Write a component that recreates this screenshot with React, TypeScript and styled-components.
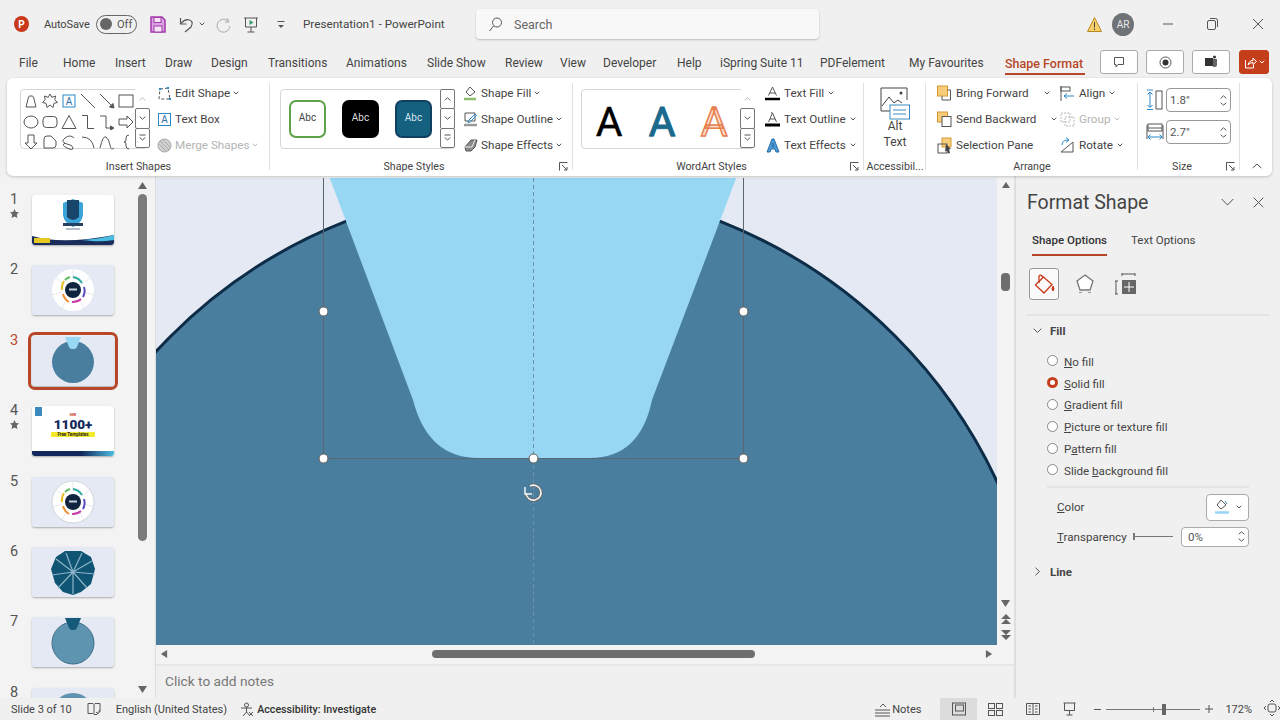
import React from "react";
import styled, { createGlobalStyle } from "styled-components";

const Global = createGlobalStyle`
  html, body { margin: 0; padding: 0; background: #f0f0f0; }
  * { box-sizing: border-box; }
  svg { display: block; flex: none; }
`;

const Page = styled.div`
  width: 1280px; height: 720px; overflow: hidden; display: flex; flex-direction: column;
  background: #f0f0f0; color: #444; font-family: Roboto, "Liberation Sans", sans-serif; font-size: 12px;
`;

/* ---------- title bar ---------- */
const TitleBar = styled.header`
  height: 48px; flex: none; display: flex; align-items: center; padding-left: 14px; position: relative;
`;
const Logo = styled.div`
  width: 15px; height: 16px; border-radius: 50%; background: #c8391b; color: #fff; font-size: 10px; font-weight: 700;
  display: flex; align-items: center; justify-content: center;
`;
const AutoLabel = styled.span`margin-left: 15px; width: 52px; font-size: 11px; letter-spacing: -.1px; color: #444;`;
const Toggle = styled.div`
  width: 41px; height: 19px; border: 1px solid #666; border-radius: 10px; display: flex; align-items: center; padding-left: 3px; gap: 5px; font-size: 11px; color: #555;
  &::before { content: ""; width: 12px; height: 12px; border-radius: 50%; background: #666; }
`;
const Qat = styled.div<{ $ml: number }>`margin-left: ${p => p.$ml}px; display: flex; align-items: center;`;
const DocTitle = styled.span`margin-left: 18px; width: 173px; font-size: 11.7px; color: #444;`;
const SearchBox = styled.div`
  width: 343px; height: 30px; background: #f8f8f8; border-radius: 4px; box-shadow: 0 1px 2px rgba(0,0,0,.22);
  display: flex; align-items: center; padding-left: 12px; gap: 12px; color: #666; font-size: 12.5px;
`;
const TitleRight = styled.div`
  margin-left: auto; display: flex; align-items: center;
`;
const Avatar = styled.div`
  width: 22px; height: 23px; border-radius: 50%; background: #6f7378; color: #e8e8e8; font-size: 10px; display: flex; align-items: center; justify-content: center; margin: 0 11px 0 10px;
`;
const WinBtn = styled.div`width: 45px; display: flex; justify-content: center;`;

/* ---------- tabs ---------- */
const TabBar = styled.nav`height: 30px; flex: none; display: flex; align-items: flex-start; padding-left: 19px;`;
const Tab = styled.div<{ $w: number; $active?: boolean }>`
  width: ${p => p.$w}px; flex: none; height: 26px; line-height: 31px; white-space: nowrap; position: relative;
  font-size: ${p => (p.$active ? 12.5 : 12)}px;
  color: ${p => (p.$active ? "#b7472a" : "#444")}; font-weight: ${p => (p.$active ? 500 : 400)};
`;
const TabLine = styled.div`position: absolute; left: 0; width: 80px; bottom: -1px; height: 2px; background: #b7472a;`;
const TabActions = styled.div`display: flex; gap: 8px; margin-left: 15px; margin-top: 2px;`;
const ActionBtn = styled.div<{ $share?: boolean }>`
  width: ${p => (p.$share ? 30 : 38)}px; height: 24px; border-radius: 3px; display: flex; align-items: center; justify-content: center; gap: 2px;
  background: ${p => (p.$share ? "#c43e1c" : "#fff")}; border: 1px solid ${p => (p.$share ? "#c43e1c" : "#aaa")}; margin-left: ${p => (p.$share ? 1 : 0)}px;
`;

/* ---------- ribbon ---------- */
const Ribbon = styled.section`
  height: 98px; flex: none; margin: 0 8px 0 7px; background: #fff; border-radius: 6px; box-shadow: 0 1px 3px rgba(0,0,0,.2); display: flex; position: relative; z-index: 2;
`;
const Group = styled.div<{ $w: number }>`
  width: ${p => p.$w}px; flex: none; display: flex; flex-direction: column; position: relative;
  &:not(:last-child)::after { content: ""; position: absolute; right: 0; top: 5px; bottom: 6px; width: 1px; background: #e0e0e0; }
`;
const GroupBody = styled.div<{ $pl: number }>`flex: 1; display: flex; padding-left: ${p => p.$pl}px; align-items: flex-start; min-height: 0;`;
const GroupLabel = styled.div<{ $pr?: number }>`
  height: 20px; flex: none; text-align: center; font-size: 10.7px; color: #444; line-height: 21px; white-space: nowrap; padding-right: ${p => p.$pr ?? 0}px;
`;
const Launcher = styled.div`position: absolute; right: 5px; bottom: 5px;`;
const Gallery = styled.div<{ $w: number }>`
  width: ${p => p.$w}px; height: 60px; margin-top: 11px; border: 1px solid #d6d6d6; border-radius: 4px; display: flex; position: relative; flex: none;
`;
const GalleryItems = styled.div`flex: 1; display: flex; align-items: center;`;
const ShapeGrid = styled.div`
  flex: 1; display: grid; grid-template-columns: repeat(6, 19px); grid-auto-rows: 20.5px; padding: 1px 0 0 0; align-content: start; justify-items: center; align-items: center;
`;
const ScrollCol = styled.div`width: 14px; flex: none; display: flex; flex-direction: column;`;
const ScrollBtn = styled.div<{ $off?: boolean }>`
  flex: 1; display: flex; align-items: center; justify-content: center;
  border: 1px solid ${p => (p.$off ? "transparent" : "#777")}; margin: -1px -1px 0 0; background: #fff; border-radius: 2px;
`;
const StyleSwatch = styled.div<{ $bg: string; $bd: string; $fg: string }>`
  width: 37px; height: 38px; border-radius: 7px; background: ${p => p.$bg}; border: 2px solid ${p => p.$bd}; color: ${p => p.$fg};
  display: flex; align-items: center; justify-content: center; font-size: 10px; padding-bottom: 4px; margin-left: ${p => (p.$bg === "#fff" ? 8 : 16)}px;
`;
const WordA = styled.div<{ $c: string; $s: string; $sw?: number; $shadow?: string; $ml: number }>`
  font-family: Roboto, sans-serif; font-size: 41px; line-height: 40px; font-weight: 400; margin-left: ${p => p.$ml}px; margin-top: 6px; width: 28px; text-align: center;
  color: ${p => p.$c}; -webkit-text-stroke: ${p => p.$sw ?? 1}px ${p => p.$s}; text-shadow: ${p => p.$shadow || "none"};
`;
const Commands = styled.div<{ $ml: number; $w?: number }>`
  margin-left: ${p => p.$ml}px; ${p => (p.$w ? `width:${p.$w}px;` : "")} padding-top: 2px; display: flex; flex-direction: column; flex: none;
`;
const Command = styled.div<{ $off?: boolean; $gap?: number }>`
  height: 26px; display: flex; align-items: center; gap: ${p => p.$gap ?? 3}px; white-space: nowrap; font-size: 11.7px; color: ${p => (p.$off ? "#b4b4b4" : "#444")};
`;
const CaretWrap = styled.span<{ $ml?: number }>`margin-left: ${p => p.$ml ?? 0}px; display: inline-flex;`;
const AltBox = styled.div`
  width: 100%; flex: 1; min-height: 0; display: flex; flex-direction: column; align-items: center; padding-top: 9px; font-size: 12px; line-height: 16px; text-align: center;
  svg { margin-bottom: -2px; }
`;
const SizeRows = styled.div`margin-left: 8px; margin-top: 10px; display: flex; flex-direction: column; gap: 8px;`;
const SizeRow = styled.div`display: flex; align-items: center; gap: 2px;`;
const SizeInput = styled.div`
  width: 65px; height: 24px; border: 1px solid #999; border-radius: 4px; display: flex; align-items: center; justify-content: space-between; padding: 0 3px 0 3px; font-size: 11.5px; color: #555; background: #fff;
`;
const Spin = styled.div`display: flex; flex-direction: column; gap: 3px;`;
const Collapse = styled.div`position: absolute; left: 1245px; top: 85px;`;

/* ---------- main ---------- */
const Main = styled.div`flex: 1; display: flex; min-height: 0; position: relative;`;
const SlidePane = styled.aside`width: 156px; flex: none; display: flex; overflow: hidden; background: #f3f3f3; border-right: 1px solid #dcdcdc;`;
const ThumbList = styled.div`width: 136px; flex: none; padding-top: 19px; display: flex; flex-direction: column; gap: 20.4px;`;
const ThumbRow = styled.div`display: flex; height: 50px; flex: none; position: relative;`;
const ThumbNum = styled.div<{ $sel?: boolean }>`
  width: 32px; flex: none; display: flex; flex-direction: column; align-items: center; padding-right: 4px; margin-top: -4px; font-size: 14.5px; line-height: 18px; color: ${p => (p.$sel ? "#b7472a" : "#555")};
`;
const Thumb = styled.div<{ $sel?: boolean }>`
  width: 82px; height: 50px; flex: none; border-radius: 3px; overflow: hidden; background: #e4e9f3; box-shadow: 0 1px 2px rgba(0,0,0,.3);
  ${p => p.$sel ? "outline: 3px solid #b7472a; outline-offset: 1px;" : ""}
`;
const ListScroll = styled.div`width: 11px; margin-left: 1px; flex: none; display: flex; flex-direction: column; align-items: center; padding-top: 5px;`;
const ThumbScrollBar = styled.div`width: 9px; height: 347px; margin-top: 4px; background: #7a7a7a; border-radius: 5px;`;
const ListDown = styled.div`margin-top: 144px;`;
const Center = styled.div`flex: 1; display: flex; flex-direction: column; min-width: 0; background: #f3f3f3;`;
const CanvasRow = styled.div`height: 467px; flex: none; display: flex; margin-top: 2px;`;
const Canvas = styled.div`width: 841px; height: 467px; flex: none; overflow: hidden; background: #e4e9f3;`;
const VBar = styled.div`flex: 1; display: flex; flex-direction: column; align-items: center; padding-top: 3px;`;
const VThumb = styled.div`width: 9px; height: 18px; margin-top: 84px; background: #6e6e6e; border-radius: 4px;`;
const VBottom = styled.div`margin-top: auto; display: flex; flex-direction: column; align-items: center; gap: 6px; padding-bottom: 5px;`;
const HBar = styled.div`height: 17px; flex: none; display: flex; align-items: center; padding-left: 4px;`;
const HThumb = styled.div`width: 323px; height: 8px; margin-left: 264px; background: #6e6e6e; border-radius: 4px;`;
const HEnd = styled.div`margin-left: 230px;`;
const NotesPane = styled.div`
  flex: 1; border-top: 2px solid #e6e6e6; margin-top: 2px; background: #f0f0f0; padding: 0 0 2px 9px; display: flex; align-items: center; font-size: 13.7px; color: #777;
`;

/* ---------- format panel ---------- */
const Panel = styled.aside`
  width: 266px; flex: none; border-left: 2px solid #dedede; background: #f0f0f0; padding: 0 0 0 11px; display: flex; flex-direction: column; position: relative;
`;
const PanelHead = styled.div`height: 49px; display: flex; align-items: center; padding-top: 3px;`;
const PanelTitle = styled.div`font-size: 19.5px; color: #444; flex: 1;`;
const PanelHeadIcons = styled.div`display: flex; gap: 19px; padding-right: 16px; align-items: center;`;
const PanelTabs = styled.div`display: flex; gap: 24px; padding-left: 5px; height: 31px; align-items: center;`;
const PanelTab = styled.div<{ $active?: boolean }>`
  height: 31px; line-height: 31px; font-size: 11.5px; position: relative; color: ${p => (p.$active ? "#333" : "#444")};
  ${p => p.$active ? "font-weight: 500; box-shadow: inset 0 -2px 0 #b7472a;" : ""}
`;
const PanelIcons = styled.div`display: flex; margin-top: 12px; align-items: center; padding-left: 2px; gap: 11px;`;
const IconTab = styled.div<{ $active?: boolean }>`
  width: 30px; height: 32px; display: flex; align-items: center; justify-content: center; border-radius: 3px;
  ${p => p.$active ? "border: 1px solid #999; background: #fafafa;" : ""}
`;
const Rule = styled.div<{ $ml?: number; $mr?: number; $mt?: number }>`
  height: 2px; flex: none; background: #e4e4e4; margin: ${p => p.$mt ?? 0}px ${p => p.$mr ?? 0}px 0 ${p => p.$ml ?? 0}px;
`;
const SectionHead = styled.div<{ $mt: number }>`display: flex; align-items: center; gap: 8px; font-weight: 700; font-size: 11.5px; color: #444; padding-left: 6px; margin-top: ${p => p.$mt}px;`;
const RadioList = styled.div`display: flex; flex-direction: column; padding-left: 20px; margin-top: 13px;`;
const RadioRow = styled.div`height: 21.8px; display: flex; align-items: center; gap: 6px; font-size: 11.6px; color: #444;`;
const Radio = styled.span<{ $on?: boolean }>`
  width: 11px; height: 11px; border-radius: 50%; background: #fff; flex: none; margin-top: -2px;
  border: ${p => (p.$on ? "3px solid #c43e1c" : "1px solid #888")};
`;
const PropRow = styled.div<{ $mt: number }>`display: flex; align-items: center; padding-left: 30px; margin-right: 31px; margin-top: ${p => p.$mt}px; font-size: 11.6px; color: #444;`;
const ColorBtn = styled.div`
  margin-left: auto; width: 43px; height: 27px; border: 1px solid #aaa; border-radius: 4px; background: #fff; display: flex; align-items: center; justify-content: center; gap: 6px;
`;
const SliderTrack = styled.div`
  margin-left: 6px; width: 40px; height: 1px; background: #777; position: relative;
  &::before { content: ""; position: absolute; left: 0; top: -3px; width: 2px; height: 7px; background: #777; }
`;
const PropInput = styled.div`
  margin-left: auto; width: 68px; height: 20px; border: 1px solid #aaa; border-radius: 4px; background: #fff; display: flex; align-items: center; justify-content: space-between; padding: 0 3px 0 6px; font-size: 11.5px; color: #555;
`;

/* ---------- status bar ---------- */
const StatusBar = styled.footer`
  height: 22px; flex: none; display: flex; align-items: center; background: #f0f0f0; padding-left: 11px; font-size: 11px; color: #444; position: relative; z-index: 2;
`;
const StatusText = styled.span<{ $ml?: number; $bold?: boolean }>`
  margin-left: ${p => p.$ml ?? 0}px; white-space: nowrap; font-weight: ${p => (p.$bold ? 500 : 400)}; color: ${p => (p.$bold ? "#333" : "#444")};
  font-size: ${p => (p.$bold ? 10.7 : 11)}px;
`;
const StatusRight = styled.div`margin-left: auto; display: flex; align-items: center; height: 22px;`;
const ViewBtn = styled.div<{ $active?: boolean }>`
  width: 37px; height: 22px; display: flex; align-items: center; justify-content: center; background: ${p => (p.$active ? "#dcdcdc" : "transparent")};
`;
const ZoomTrack = styled.div`
  width: 94px; height: 1px; background: #777; position: relative; margin: 0 5px;
  &::before { content: ""; position: absolute; left: 47px; top: -2px; width: 1px; height: 5px; background: #777; }
  &::after { content: ""; position: absolute; left: 56px; top: -5px; width: 4px; height: 11px; background: #666; }
`;

/* ---------- icons ---------- */
type P = { w?: number; h?: number; vb?: string; children: React.ReactNode };
const Ic = ({ w = 16, h = 16, vb, children }: P) => (
  <svg width={w} height={h} viewBox={vb || `0 0 ${w} ${h}`} fill="none" stroke="#555" strokeWidth="1">{children}</svg>
);
const Caret = () => <Ic w={6} h={4}><path d="M.7.7 3 3l2.3-2.3" /></Ic>;
const Up = () => <Ic w={7} h={4}><path d="M.7 3.3 3.5.8l2.8 2.5" /></Ic>;
const Down = () => <Ic w={7} h={4}><path d="M.7.7 3.5 3.2 6.3.7" /></Ic>;
const Tri = ({ d, c = "#666", s = 9 }: { d: "u" | "d" | "l" | "r"; c?: string; s?: number }) => {
  const m = { u: "M0 8 4.5 1 9 8Z", d: "M0 1 4.5 8 9 1Z", l: "M8 0 1 4.5 8 9Z", r: "M1 0 8 4.5 1 9Z" }[d];
  return <svg width={s} height={s} viewBox="0 0 9 9"><path d={m} fill={c} /></svg>;
};
const LaunchIc = () => <Ic w={9} h={9}><path d="M.5 8.5V.5h8" /><path d="M3 3l5 5M8 5v3H5" /></Ic>;

const shapes: React.ReactNode[] = [
  <path d="M3 14 5.5 4Q6 3 7 3h2q1 0 1.500 1L13 14Z" />,
  <path d="M8 1l1.800 3.300L13.600 3l-.8 3.700L15.500 9.500l-3.500.8L11 14.500 8 12l-3 2.500-1-4.200-3.500-.8 2.700-2.800L2.400 3l3.800 1.300Z" />,
  <><rect x="2" y="2" width="12" height="12" stroke="#2b88c8" /><text x="8" y="12" textAnchor="middle" fontSize="10" fill="#2b6ea8" stroke="none" fontFamily="Roboto">A</text></>,
  <path d="M1 1 15 15" />,
  <><path d="M1 1 15 15" /><path d="M15 15 14 10.500 10.500 14Z" fill="#555" /></>,
  <rect x="1" y="2" width="14" height="12" />,
  <ellipse cx="8" cy="8" rx="7" ry="6" />,
  <rect x="1" y="2.500" width="14" height="11" rx="3.500" />,
  <path d="M8 1.500 15 14.500H1Z" />,
  <path d="M2 1.500h5.500v13H14" />,
  <><path d="M1 2h6v12h6" /><path d="M15 14 11.500 12v4Z" fill="#555" /></>,
  <path d="M1 5h8V2l6 6-6 6v-3H1Z" />,
  <path d="M5 1h6v8h3l-6 6-6-6h3Z" />,
  <path d="M2 14V5Q2 2 5 2h4l5 5v4q0 3-3 3Z" />,
  <path d="M13 4Q9 0 4 4t2 6q6 1 6 4T6 14 4 9" />,
  <path d="M2 3Q12 3 14 14" />,
  <path d="M1 14Q4 1 7 3t4 8 4 3" />,
  <path d="M11 1Q8 1 8 4v2Q8 8 6 8q2 0 2 2v2q0 3 3 3" />,
];

const Stack = styled.div`position: relative; display: flex;`;
const Shield = () => (
  <svg width="82" height="50" viewBox="0 0 82 50">
    <rect width="82" height="50" fill="#fff" />
    <path d="M31 8 41 4 51 8V20Q50 28 41 32 32 28 31 20Z" fill="#3aa3d8" />
    <path d="M35 5H47V22Q41 28 35 22Z" fill="#17456c" />
    <rect x="31" y="28" width="20" height="3" fill="#27405f" />
    <rect x="34" y="33" width="14" height="2" fill="#b8c0cc" />
    <path d="M0 41Q30 50 82 40V50H0Z" fill="#1a2c5c" />
    <path d="M50 45Q68 44 82 40V45Q70 47 60 46Z" fill="#4bbde0" />
    <rect x="2" y="43" width="16" height="5" fill="#e8c81e" />
  </svg>
);
const Wheel = ({ white }: { white?: boolean }) => (
  <svg width="82" height="50" viewBox="0 0 82 50">
    <rect width="82" height="50" fill="#e4e9f3" />
    <circle cx="41" cy="25" r="21" fill="#fff" stroke={white ? "#d0d4dc" : "none"} />
    <g stroke="#dde0e6" strokeWidth=".7">
      <path d="M41 4V14M58 13 50 19M62 30 52 27M52 43 47 34M30 43 35 34M20 30 30 27M24 13 32 19" />
    </g>
    <g fill="none" strokeWidth="2">
      <path d="M32 16a13 13 0 0 0-2 9" stroke="#e8c030" />
      <path d="M31 29a13 13 0 0 0 6 8" stroke="#f09030" />
      <path d="M40 37a13 13 0 0 0 9-3" stroke="#c83aa8" />
      <path d="M51 32a13 13 0 0 0 1-10" stroke="#5a4ac0" />
      <path d="M50 18a13 13 0 0 0-9-6" stroke="#30a8a0" />
      <path d="M38 12a13 13 0 0 0-5 3" stroke="#60c060" />
    </g>
    <circle cx="41" cy="25" r="8" fill="#10243f" />
    <rect x="37" y="23.500" width="8" height="2" fill="#c8d0dc" />
  </svg>
);
const Disc = ({ fill, top, stroke }: { fill: string; top: string; stroke?: string }) => (
  <svg width="82" height="50" viewBox="0 0 82 50">
    <rect width="82" height="50" fill="#e4e9f3" />
    <circle cx="41" cy="26" r="21" fill={fill} stroke={stroke || "none"} />
    <path d="M33 1H49L45 11Q44 13 42 13H40Q38 13 37 11Z" fill={top} />
  </svg>
);
const Gear = () => (
  <svg width="82" height="50" viewBox="0 0 82 50">
    <rect width="82" height="50" fill="#e4e9f3" />
    <path d="M33 4H49L59 10 63 22 59 37 49 45 41 48 31 45 23 36 19 22 24 10Z" fill="#0f5473" />
    <g stroke="#8db4c8" strokeWidth="1.200">
      <path d="M41 25 34 6M41 25 50 6M41 25 60 14M41 25 63 27M41 25 55 41M41 25 41 47M41 25 26 41M41 25 20 28M41 25 24 12" />
    </g>
  </svg>
);
const BigThumb = styled.div`
  width: 82px; height: 50px; background: #fff; position: relative; display: flex; flex-direction: column; align-items: center; overflow: hidden;
`;
const ThumbMini = styled.div`height: 5px; font-size: 3px; line-height: 5px; color: #c8391b; margin-top: 7px; font-weight: 700;`;
const ThumbBig = styled.div`font-size: 13.500px; line-height: 13px; font-weight: 900; color: #12285c;`;
const ThumbTag = styled.div`background: #f2ea28; border-radius: 1px; font-size: 4.500px; line-height: 5px; width: 44px; text-align: center; color: #222; font-weight: 700; margin-top: 1px;`;
const ThumbWave = styled.div`position: absolute; left: 0; right: 0; bottom: 0; height: 5px; background: linear-gradient(90deg,#12285c 60%,#4bbde0);`;
const ThumbCorner = styled.div`position: absolute; left: 3px; top: 1px; width: 7px; height: 9px; background: #3a8ac0;`;

const thumbs: { n: number; star?: boolean; el: React.ReactNode; sel?: boolean }[] = [
  { n: 1, star: true, el: <Shield /> },
  { n: 2, el: <Wheel /> },
  { n: 3, sel: true, el: <Disc fill="#4a7e9e" top="#99d8f5" /> },
  { n: 4, star: true, el: <BigThumb><ThumbCorner /><ThumbMini>NEW</ThumbMini><ThumbBig>1100+</ThumbBig><ThumbTag>Free Templates</ThumbTag><ThumbWave /></BigThumb> },
  { n: 5, el: <Wheel white /> },
  { n: 6, el: <Gear /> },
  { n: 7, el: <Disc fill="#5f94b0" top="#155a78" stroke="#3e6f8a" /> },
  { n: 8, el: <Disc fill="#5f94b0" top="#5f94b000" /> },
];

const tabs: [string, number][] = [
  ["File", 44], ["Home", 52], ["Insert", 50], ["Draw", 46], ["Design", 57], ["Transitions", 78], ["Animations", 81],
  ["Slide Show", 78], ["Review", 55], ["View", 43], ["Developer", 74], ["Help", 43], ["iSpring Suite 11", 100], ["PDFelement", 89], ["My Favourites", 96],
];

const ScrollDownMore = () => <Ic w={7} h={7}><path d="M.5 1h6" /><path d="M.7 3.500 3.500 6l2.800-2.500" /></Ic>;
const ScrollUpOff = () => <svg width="7" height="4" viewBox="0 0 7 4"><path d="M.7 3.300 3.500.8l2.800 2.500" stroke="#bbb" fill="none" /></svg>;
const CaretOff = () => <svg width="6" height="4" viewBox="0 0 6 4"><path d="M.7.7 3 3l2.300-2.300" stroke="#bbb" fill="none" /></svg>;

const App = () => (
  <Page>
    <Global />
    <TitleBar>
      <Logo>P</Logo>
      <AutoLabel>AutoSave</AutoLabel>
      <Toggle>Off</Toggle>
      <Qat $ml={13}>
        <Ic w={16} h={17}>
          <path d="M1 1h11l3 3v12H1Z" stroke="#a33aa8" strokeWidth="1.500" fill="#d9a2e0" />
          <rect x="4" y="1.500" width="7" height="5" fill="#f4e6f6" stroke="#a33aa8" />
          <rect x="4" y="10" width="8" height="6" fill="#f4e6f6" stroke="#a33aa8" />
        </Ic>
      </Qat>
      <Qat $ml={13}>
        <Ic w={15} h={17}><path d="M1.500 2v6h6" strokeWidth="1.200" /><path d="M2 7.500Q6 2.500 10.500 4T12 11L6 16" strokeWidth="1.200" /></Ic>
        <CaretWrap $ml={5}><Caret /></CaretWrap>
      </Qat>
      <Qat $ml={11}>
        <Ic w={16} h={17}><path d="M11 2 13 6H9" stroke="#aaa" /><path d="M12 5A6.500 6.500 0 1 0 14 10" stroke="#aaa" /></Ic>
      </Qat>
      <Qat $ml={11}>
        <Ic w={16} h={17}>
          <path d="M1 2h14M2.500 2v9h11V2M8 11v5M4.500 16h7" />
          <path d="M6.500 4v5L10.500 6.500Z" fill="#2f9e6e" stroke="none" />
        </Ic>
      </Qat>
      <Qat $ml={18}><Ic w={8} h={9}><path d="M.5 1.500h7" /><path d="M1 5h6L4 8Z" fill="#555" stroke="none" /></Ic></Qat>
      <DocTitle>Presentation1 - PowerPoint</DocTitle>
      <SearchBox>
        <Ic w={14} h={15}><circle cx="9" cy="5.500" r="4.500" /><path d="M5.500 9 1.500 14" /></Ic>
        Search
      </SearchBox>
      <TitleRight>
        <Ic w={15} h={17}><path d="M7.500 1.500 14.500 15.500H.5Z" fill="#f6cf6b" stroke="#b98a20" /><path d="M7.500 6v5.500M7.500 12.500v1.500" stroke="#444" /></Ic>
        <Avatar>AR</Avatar>
        <WinBtn><Ic w={10} h={2}><path d="M0 1h10" /></Ic></WinBtn>
        <WinBtn><Ic w={11} h={12}><rect x=".5" y="2.500" width="8" height="9" rx="1.500" /><path d="M3 .5h5.500q2 0 2 2V9" /></Ic></WinBtn>
        <WinBtn><Ic w={12} h={12}><path d="M1 1 11 11M11 1 1 11" /></Ic></WinBtn>
      </TitleRight>
    </TitleBar>

    <TabBar>
      {tabs.map(([t, w]) => <Tab key={t} $w={w}>{t}</Tab>)}
      <Tab $w={80} $active>Shape Format<TabLine /></Tab>
      <TabActions>
        <ActionBtn><Ic w={12} h={12}><path d="M1.500 1.500h9v7H5L3 11V8.500H1.500Z" /></Ic></ActionBtn>
        <ActionBtn><Ic w={13} h={13}><circle cx="6.500" cy="6.500" r="5.500" /><circle cx="6.500" cy="6.500" r="3" fill="#333" stroke="none" /></Ic></ActionBtn>
        <ActionBtn><Ic w={14} h={14}><rect x="1" y="3" width="8" height="8" fill="#333" stroke="none" /><path d="M9 4h4v6q0 2-2 2H9" fill="#666" stroke="none" /><circle cx="10.500" cy="2" r="1.500" fill="#333" stroke="none" /></Ic></ActionBtn>
        <ActionBtn $share>
          <Ic w={13} h={13}><path d="M1.500 4v8h8V9" stroke="#fff" /><path d="M4 9Q5 4.500 9 4.500V2l3.500 3.500L9 8.500V6.500Q6 6.500 4 9Z" stroke="#fff" /></Ic>
          <svg width="6" height="4" viewBox="0 0 6 4"><path d="M.7.7 3 3l2.300-2.300" stroke="#fff" fill="none" /></svg>
        </ActionBtn>
      </TabActions>
    </TabBar>

    <Ribbon>
      <Group $w={263}>
        <GroupBody $pl={13}>
          <Gallery $w={128}>
            <ShapeGrid>{shapes.map((s, i) => <Ic key={i} w={16} h={16}>{s}</Ic>)}</ShapeGrid>
            <ScrollCol>
              <ScrollBtn $off><ScrollUpOff /></ScrollBtn>
              <ScrollBtn><Down /></ScrollBtn>
              <ScrollBtn><ScrollDownMore /></ScrollBtn>
            </ScrollCol>
          </Gallery>
          <Commands $ml={9}>
            <Command>
              <Ic w={15} h={15}><path d="M3 3 11 2 13 13H2Z" strokeDasharray="3 2" /><rect x="2" y="2" width="2" height="2" fill="#2b88c8" stroke="none" /><rect x="10" y="1" width="2" height="2" fill="#2b88c8" stroke="none" /><rect x="12" y="12" width="2" height="2" fill="#2b88c8" stroke="none" /></Ic>
              Edit Shape <Caret />
            </Command>
            <Command>
              <Ic w={15} h={15}><rect x="1.500" y="1.500" width="12" height="12" stroke="#2b88c8" /><text x="7.500" y="11" textAnchor="middle" fontSize="10" fill="#2b6ea8" stroke="none" fontFamily="Roboto">A</text></Ic>
              Text Box
            </Command>
            <Command $off>
              <svg width="15" height="15" viewBox="0 0 15 15"><circle cx="7.500" cy="7.500" r="6.500" fill="#d0d0d0" stroke="#aaa" /><path d="M3 3l9 9M6 2l7 7M2 6l7 7" stroke="#aaa" /></svg>
              Merge Shapes <CaretOff />
            </Command>
          </Commands>
        </GroupBody>
        <GroupLabel>Insert Shapes</GroupLabel>
      </Group>

      <Group $w={303}>
        <GroupBody $pl={10}>
          <Gallery $w={175}>
            <GalleryItems>
              <StyleSwatch $bg="#fff" $bd="#5da24a" $fg="#444">Abc</StyleSwatch>
              <StyleSwatch $bg="#000" $bd="#000" $fg="#ddd">Abc</StyleSwatch>
              <StyleSwatch $bg="#15607f" $bd="#103f60" $fg="#cfe4ee">Abc</StyleSwatch>
            </GalleryItems>
            <ScrollCol>
              <ScrollBtn><Up /></ScrollBtn>
              <ScrollBtn><Down /></ScrollBtn>
              <ScrollBtn><ScrollDownMore /></ScrollBtn>
            </ScrollCol>
          </Gallery>
          <Commands $ml={8}>
            <Command>
              <Ic w={15} h={15}><path d="M7 1 12 6 7 10 3 6Z" /><path d="M1 13h12" stroke="#8cc070" strokeWidth="2.500" /></Ic>
              Shape Fill <Caret />
            </Command>
            <Command>
              <Ic w={15} h={15}><path d="M2 1h10v8H2Z" /><path d="M5 9 12 2l1.500 1.500L6.500 10.500H5Z" stroke="#2b88c8" /><path d="M1 13h13" stroke="#999" strokeWidth="2.500" /></Ic>
              Shape Outline <Caret />
            </Command>
            <Command>
              <Ic w={15} h={15}><path d="M2 9 8 2h6l-2 7-4 4H3Z" fill="#8a8a8a" /><path d="M2 9h7l3-7" stroke="#eee" /></Ic>
              Shape Effects <Caret />
            </Command>
          </Commands>
        </GroupBody>
        <GroupLabel $pr={15}>Shape Styles</GroupLabel>
        <Launcher><LaunchIc /></Launcher>
      </Group>

      <Group $w={291}>
        <GroupBody $pl={8}>
          <Gallery $w={174}>
            <GalleryItems>
              <WordA $ml={13} $c="#000" $s="#000" $sw={.4}>A</WordA>
              <WordA $ml={25} $c="#1b6a8e" $s="#1b6a8e" $shadow="0 1px 1px #88b0c8">A</WordA>
              <WordA $ml={24} $c="#fbdccc" $s="#e8804e" $sw={1.500}>A</WordA>
            </GalleryItems>
            <ScrollCol>
              <ScrollBtn $off><ScrollUpOff /></ScrollBtn>
              <ScrollBtn><Down /></ScrollBtn>
              <ScrollBtn><ScrollDownMore /></ScrollBtn>
            </ScrollCol>
          </Gallery>
          <Commands $ml={10}>
            <Command $gap={4}>
              <Ic w={15} h={15}><path d="M3.500 9.500 7.500 1l4 8.500M5 7h5" /><path d="M0 13h15" stroke="#000" strokeWidth="2.500" /></Ic>
              Text Fill <Caret />
            </Command>
            <Command $gap={4}>
              <Ic w={15} h={15}><path d="M3.500 10 7.500 1l4 9M5 7h5M6 1l1.500-1" /><path d="M0 13h15" stroke="#000" strokeWidth="3" /></Ic>
              Text Outline <Caret />
            </Command>
            <Command $gap={4}>
              <Ic w={15} h={15}><path d="M2 14 7 1h2l5 13h-3L10 11H6l-1 3ZM7 8.500h2L8 5Z" fill="#4a9ad8" stroke="#2b6ea8" /></Ic>
              Text Effects <Caret />
            </Command>
          </Commands>
        </GroupBody>
        <GroupLabel $pr={14}>WordArt Styles</GroupLabel>
        <Launcher><LaunchIc /></Launcher>
      </Group>

      <Group $w={62}>
        <AltBox>
          <Ic w={30} h={33}>
            <path d="M21 24H1V1h26v12" stroke="#444" />
            <path d="M2 19 9 10l5 6 4-3 4 3" stroke="#444" />
            <circle cx="21" cy="6" r="1.500" fill="#444" stroke="none" />
            <rect x="10" y="18" width="19.500" height="14" fill="#fff" stroke="#3a8ac0" />
            <path d="M13 23h13M13 27h13" stroke="#3a8ac0" />
          </Ic>
          <span>Alt</span>
          <span>Text</span>
        </AltBox>
        <GroupLabel>Accessibil...</GroupLabel>
      </Group>

      <Group $w={212}>
        <GroupBody $pl={11}>
          <Commands $ml={0} $w={123}>
            <Command $gap={4}>
              <Ic w={15} h={17}><rect x=".5" y="1" width="10" height="10" fill="#f7cd7b" stroke="#d69a34" /><path d="M10.500 5h3v10H5v-4" /></Ic>
              Bring Forward <CaretWrap $ml={11}><Caret /></CaretWrap>
            </Command>
            <Command $gap={4}>
              <Ic w={15} h={17}><rect x=".5" y="1" width="10" height="10" fill="#f7cd7b" stroke="#d69a34" /><rect x="5" y="5.500" width="9" height="10" fill="#fff" /></Ic>
              Send Backward <CaretWrap $ml={11}><Caret /></CaretWrap>
            </Command>
            <Command $gap={4}>
              <Ic w={15} h={17}><rect x="5" y="1" width="9" height="9" fill="#f7cd7b" stroke="#d69a34" /><rect x="1" y="7" width="9" height="9" /><path d="M9 7l5 5-2 .5L13 16l-2 .5-1-3-2 1Z" fill="#444" stroke="none" /></Ic>
              Selection Pane
            </Command>
          </Commands>
          <Commands $ml={0}>
            <Command $gap={4}>
              <Ic w={15} h={17}><path d="M1 1v15" /><rect x="1" y="2" width="9" height="4" /><path d="M14 11H4M7 8.500 4 11l3 2.500" stroke="#2b88c8" /></Ic>
              Align <Caret />
            </Command>
            <Command $off $gap={4}>
              <svg width="15" height="17" viewBox="0 0 15 17" fill="none" stroke="#bbb"><rect x="1" y="2" width="9" height="9" strokeDasharray="2 1" /><rect x="5" y="6" width="9" height="9" strokeDasharray="2 1" /></svg>
              Group <CaretOff />
            </Command>
            <Command $gap={4}>
              <Ic w={15} h={17}><path d="M1 15 13 5v10Z" /><path d="M2 8Q2 3 8 3M6 0.500 9 3 6 5.500" stroke="#2b88c8" /></Ic>
              Rotate <Caret />
            </Command>
          </Commands>
        </GroupBody>
        <GroupLabel>Arrange</GroupLabel>
      </Group>

      <Group $w={102}>
        <Stack>
          <SizeRows>
            <SizeRow>
              <Ic w={18} h={24}><path d="M4 4v15M1.500 6.500 4 4l2.500 2.500M1.500 17 4 19.500 6.500 17" stroke="#2b88c8" /><path d="M1 2h6M1 21.500h6" stroke="#2b88c8" /><rect x="10" y="3" width="6" height="18" /></Ic>
              <SizeInput>1.8"<Spin><Up /><Down /></Spin></SizeInput>
            </SizeRow>
            <SizeRow>
              <Ic w={18} h={24}><rect x="2" y="4" width="14" height="7" /><path d="M2 8h14" /><path d="M1 5v14M17 5v14" /><path d="M2 17h14M4.500 14.500 2 17l2.500 2.500M13.500 14.500 16 17l-2.500 2.500" stroke="#2b88c8" /></Ic>
              <SizeInput>2.7"<Spin><Up /><Down /></Spin></SizeInput>
            </SizeRow>
          </SizeRows>
        </Stack>
        <GroupBody $pl={0} />
        <GroupLabel $pr={14}>Size</GroupLabel>
        <Launcher><LaunchIc /></Launcher>
      </Group>
      <Collapse><Ic w={10} h={6}><path d="M.7 5 5 1l4.300 4" /></Ic></Collapse>
    </Ribbon>

    <Main>
      <SlidePane>
        <ThumbList>
          {thumbs.map(t => (
            <ThumbRow key={t.n}>
              <ThumbNum $sel={t.sel}>
                {t.n}
                {t.star && <Ic w={9} h={9} vb="0 0 10 10"><path d="M5 0l1.500 3.300L10 3.700 7.500 6.200 8.200 10 5 8.200 1.800 10l.7-3.800L0 3.700l3.500-.4Z" fill="#666" stroke="none" /></Ic>}
              </ThumbNum>
              <Thumb $sel={t.sel}>{t.el}</Thumb>
            </ThumbRow>
          ))}
        </ThumbList>
        <ListScroll>
          <Tri d="u" />
          <ThumbScrollBar />
          <ListDown><Tri d="d" /></ListDown>
        </ListScroll>
      </SlidePane>

      <Center>
        <CanvasRow>
          <Canvas>
            <svg width="841" height="467" viewBox="0 0 841 467">
              <circle cx="377" cy="520" r="512" fill="#4a7e9e" stroke="#0c2c47" strokeWidth="3" />
              <path d="M173 -2 257 222Q272 280 322 280H434Q484 280 496 222L581 -2Z" fill="#97d7f4" />
              <path d="M167.500 -2V280.500H587.500V-2" fill="none" stroke="#5a6670" strokeWidth="1" />
              <path d="M377.500 0V467" stroke="#6f8fa5" strokeWidth="1" strokeDasharray="4 3" />
              {[[167, 133], [587, 133], [167, 280], [377, 280], [587, 280]].map(([x, y]) => (
                <circle key={`${x}-${y}`} cx={x + .5} cy={y + .5} r="4.500" fill="#fff" stroke="#666" strokeWidth="1.200" />
              ))}
              <path d="M374 308A7.500 7.500 0 1 1 370 315" fill="none" stroke="#666" strokeWidth="3.200" />
              <path d="M374 308A7.500 7.500 0 1 1 370 315" fill="none" stroke="#f4f4f4" strokeWidth="1.600" />
              <path d="M369 309V316H376" fill="none" stroke="#f4f4f4" strokeWidth="1.500" />
            </svg>
          </Canvas>
          <VBar>
            <Tri d="u" s={8} />
            <VThumb />
            <VBottom>
              <Tri d="d" s={9} />
              <Ic w={10} h={10}><path d="M0 5 5 0 10 5ZM0 10 5 5 10 10Z" fill="#666" stroke="none" /></Ic>
              <Ic w={10} h={10}><path d="M0 0 5 5 10 0ZM0 5 5 10 10 5Z" fill="#666" stroke="none" /></Ic>
            </VBottom>
          </VBar>
        </CanvasRow>
        <HBar>
          <Tri d="l" s={8} />
          <HThumb />
          <HEnd><Tri d="r" s={8} /></HEnd>
        </HBar>
        <NotesPane>Click to add notes</NotesPane>
      </Center>

      <Panel>
        <PanelHead>
          <PanelTitle>Format Shape</PanelTitle>
          <PanelHeadIcons>
            <Ic w={13} h={8}><path d="M.7 1 6.500 7l5.800-6" /></Ic>
            <Ic w={11} h={11}><path d="M.7.7l9.600 9.600M10.300.7.7 10.300" /></Ic>
          </PanelHeadIcons>
        </PanelHead>
        <PanelTabs>
          <PanelTab $active>Shape Options</PanelTab>
          <PanelTab>Text Options</PanelTab>
        </PanelTabs>
        <PanelIcons>
          <IconTab $active>
            <Ic w={22} h={22}><path d="M10.500 4 19 11.500 11 20 2.500 12Z" stroke="#c8391b" strokeWidth="1.300" /><path d="M6 3v7M6 3q1.500-2 4 1" stroke="#c8391b" strokeWidth="1.300" /><path d="M20 13q-2 3 0 5 2-2 0-5Z" fill="#c8391b" stroke="#c8391b" /></Ic>
          </IconTab>
          <IconTab>
            <Ic w={20} h={22}><path d="M10 2 18 8l-3 9H5L2 8Z" fill="#fff" stroke="#777" strokeWidth="1.300" /><path d="M4 19.500h3M13 19.500h3" stroke="#999" /></Ic>
          </IconTab>
          <IconTab>
            <Ic w={22} h={22}><path d="M7 1h13M7 0v3M20 0v3M1 8v13M0 8h3M0 21h3" /><rect x="7" y="7" width="14" height="14" fill="#666" stroke="none" /><path d="M14 9v10M9 14h10" stroke="#fff" /></Ic>
          </IconTab>
        </PanelIcons>
        <Rule $mt={14} $mr={11} />
        <SectionHead $mt={8}>
          <Ic w={9} h={6}><path d="M.7.7 4.500 4.500 8.300.7" /></Ic>
          Fill
        </SectionHead>
        <RadioList>
          <RadioRow><Radio /><span><u>N</u>o fill</span></RadioRow>
          <RadioRow><Radio $on /><span><u>S</u>olid fill</span></RadioRow>
          <RadioRow><Radio /><span><u>G</u>radient fill</span></RadioRow>
          <RadioRow><Radio /><span><u>P</u>icture or texture fill</span></RadioRow>
          <RadioRow><Radio /><span>P<u>a</u>ttern fill</span></RadioRow>
          <RadioRow><Radio /><span>Slide <u>b</u>ackground fill</span></RadioRow>
        </RadioList>
        <Rule $ml={20} $mr={31} $mt={4} />
        <PropRow $mt={6}>
          <span><u>C</u>olor</span>
          <ColorBtn>
            <Ic w={16} h={16}><path d="M7 1 12 6 7 10 3 6Z" /><path d="M11 2l2 3" stroke="#3a8ac0" /><path d="M1 13.500h14" stroke="#97d7f4" strokeWidth="2.500" /></Ic>
            <Caret />
          </ColorBtn>
        </PropRow>
        <PropRow $mt={6}>
          <span><u>T</u>ransparency</span>
          <SliderTrack />
          <PropInput>0%<Spin><Up /><Down /></Spin></PropInput>
        </PropRow>
        <SectionHead $mt={18}>
          <Ic w={9} h={9}><path d="M2.500.7 6.500 4.500 2.500 8.300" /></Ic>
          Line
        </SectionHead>
      </Panel>
    </Main>

    <StatusBar>
      <StatusText>Slide 3 of 10</StatusText>
      <StatusText $ml={15}><Ic w={14} h={14}><path d="M1 1.500h5L7 2.500l1-1h5v8l-3 3H7L6 11.500H1ZM7 2.500v9" /><path d="M9 10l1.500 1.500L13 8" /></Ic></StatusText>
      <StatusText $ml={15}>English (United States)</StatusText>
      <StatusText $ml={12}><Ic w={15} h={15}><circle cx="7.500" cy="3" r="2" /><path d="M2 6h11M7.500 5v5M4 14l3.500-4 3.500 4M10 10l4 4M14 10l-4 4" /></Ic></StatusText>
      <StatusText $ml={3} $bold>Accessibility: Investigate</StatusText>
      <StatusRight>
        <Ic w={16} h={15}><path d="M0 8h15M0 11h15M0 14h15M5 5l3-3 3 3" /></Ic>
        <StatusText $ml={1}>Notes</StatusText>
        <StatusText $ml={19} />
        <ViewBtn $active><Ic w={14} h={14}><rect x=".5" y="1" width="13" height="12" /><rect x="3.500" y="3" width="8" height="6" /></Ic></ViewBtn>
        <ViewBtn><Ic w={15} h={13}><rect x=".5" y=".5" width="6" height="5" /><rect x="8.500" y=".5" width="6" height="5" /><rect x=".5" y="7.500" width="6" height="5" /><rect x="8.500" y="7.500" width="6" height="5" /></Ic></ViewBtn>
        <ViewBtn><Ic w={14} h={14}><path d="M.5 1.500h13v11H.5ZM7 1.500v11M2.500 4h2.500M2.500 7h2.500M2.500 10h2.500M9 4h2.500M9 7h2.500M9 10h2.500" /></Ic></ViewBtn>
        <ViewBtn><Ic w={13} h={14}><path d="M.5 1h12M1.500 1v7.500h10V1M6.500 8.500V13M3.500 13h6" /></Ic></ViewBtn>
        <StatusText $ml={6}><Ic w={7} h={3}><path d="M0 1.500h7" /></Ic></StatusText>
        <ZoomTrack />
        <Ic w={8} h={8}><path d="M0 4h8M4 0v8" /></Ic>
        <StatusText $ml={12}>172%</StatusText>
        <StatusText $ml={12}>
          <Ic w={16} h={18}><rect x="4" y="4" width="8" height="8" rx="2" /><path d="M2 6 0 8l2 2M14 6l2 2-2 2M6 2l2-2 2 2M6 14l2 2 2-2" /></Ic>
        </StatusText>
      </StatusRight>
    </StatusBar>
  </Page>
);

export default App;
